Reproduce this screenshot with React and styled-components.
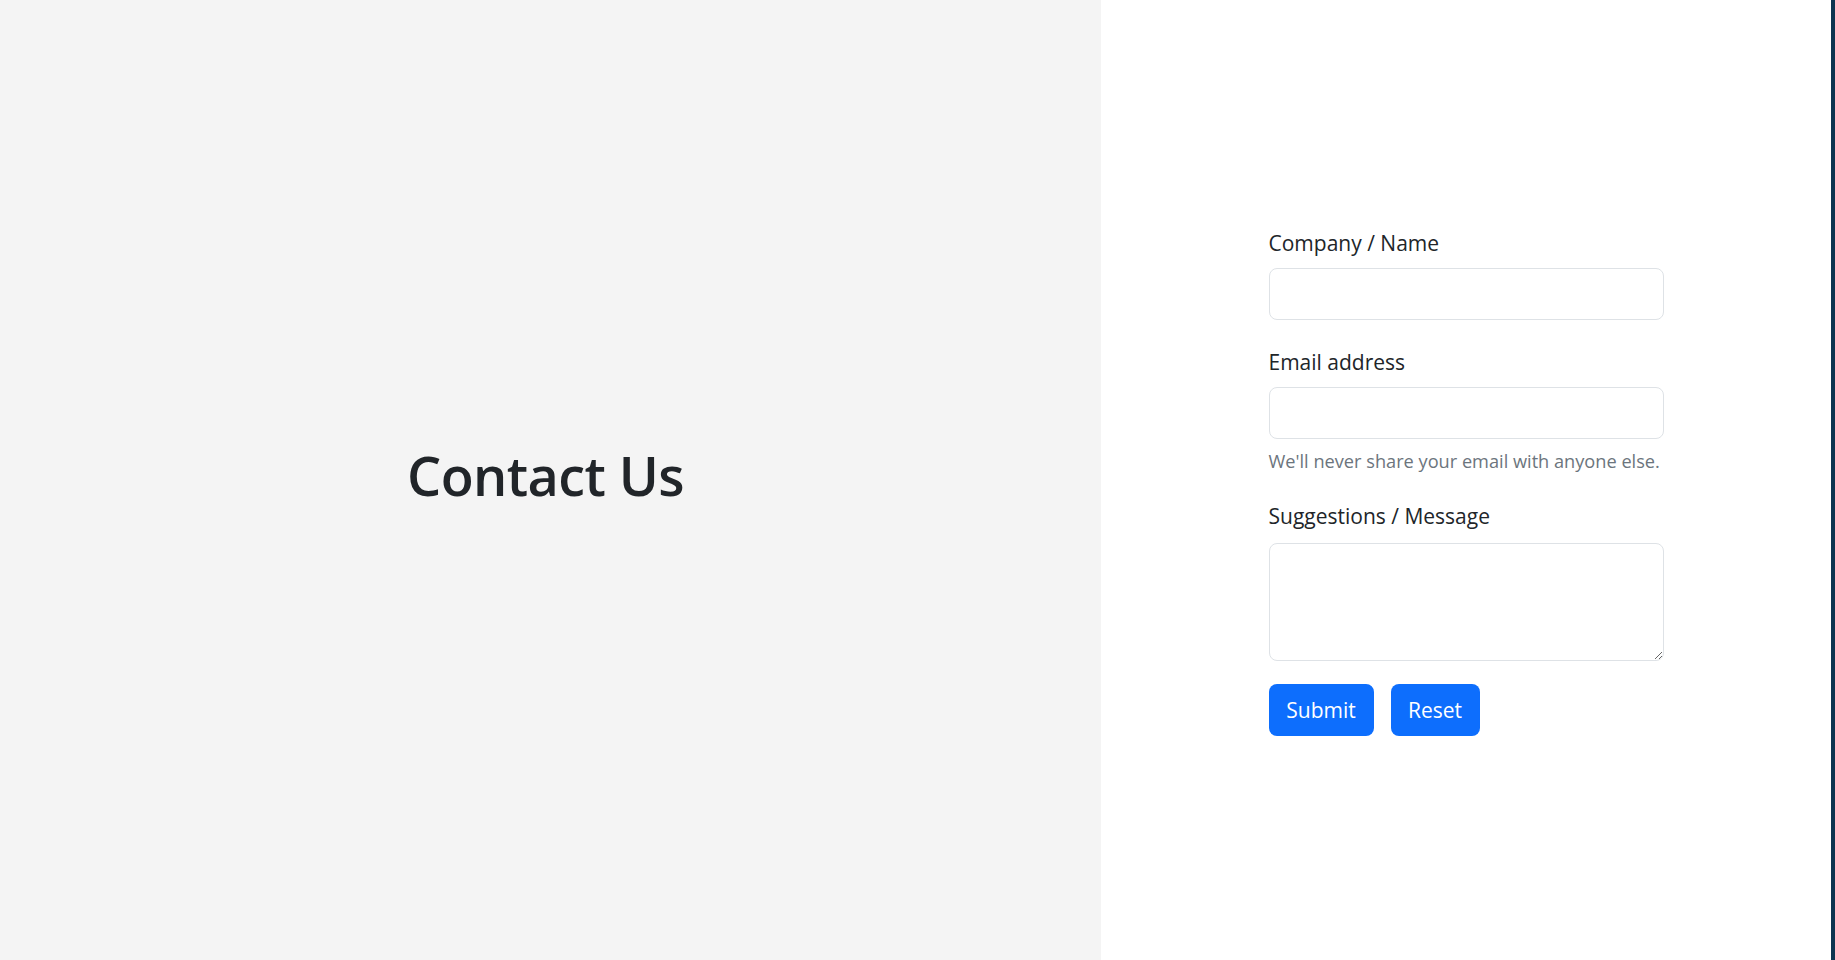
import React from "react";
import styled, { createGlobalStyle } from "styled-components";

const GlobalStyle = createGlobalStyle`
    html, body {
        margin: 0;
        padding: 0;
    }
    body {
        font-family: "Segoe UI", "Open Sans", "Noto Sans", sans-serif;
        color: #212529;
        background: #fff;
    }
`;

const Page = styled.div`
    display: grid;
    grid-template-columns: 1101px 1fr;
    height: 960px;
    border-right: 4px solid #0c3450;
    box-sizing: border-box;
`;

const Hero = styled.div`
    background-color: #f4f4f4;
    display: flex;
    align-items: center;
    justify-content: center;
    padding-right: 10px;
    padding-bottom: 10px;

    h1 {
        margin: 0;
        font-size: 54px;
        font-weight: 600;
        letter-spacing: -0.6px;
        color: #212529;
    }
`;

const FormSide = styled.div`
    display: flex;
    align-items: center;
    justify-content: center;
    padding-top: 3px;
`;

const Form = styled.form`
    width: 395px;
    display: flex;
    flex-direction: column;
`;

const Field = styled.div`
    display: flex;
    flex-direction: column;
    margin-bottom: ${props => props.$gap || 27}px;
`;

const Label = styled.label`
    font-size: 21px;
    line-height: 30px;
    margin-bottom: ${props => props.$space || 10}px;
`;

const Input = styled.input`
    box-sizing: border-box;
    height: 52px;
    border: 1px solid #dee2e6;
    border-radius: 8px;
    padding: 0 15px;
    font: inherit;
    font-size: 20px;
    outline: none;
`;

const TextArea = styled.textarea`
    box-sizing: border-box;
    height: 118px;
    border: 1px solid #dee2e6;
    border-radius: 8px;
    padding: 8px 15px;
    font: inherit;
    font-size: 20px;
    outline: none;
`;

const HelpText = styled.div`
    margin-top: 9px;
    font-size: 18.2px;
    line-height: 26px;
    color: #6c757d;
    white-space: nowrap;
`;

const Buttons = styled.div`
    display: flex;
    gap: 17px;
`;

const Button = styled.button`
    height: 52px;
    width: ${props => props.$width}px;
    border: none;
    border-radius: 8px;
    background-color: #0d6efd;
    color: #fff;
    font: inherit;
    font-size: 21px;
    cursor: pointer;
`;

const App = () => {
    return (
        <>
        <GlobalStyle />
        <Page>
            <Hero>
                <h1>Contact Us</h1>
            </Hero>
            <FormSide>
                <Form onSubmit={e => e.preventDefault()}>
                    <Field>
                        <Label htmlFor="name">Company / Name</Label>
                        <Input id="name" type="text" />
                    </Field>
                    <Field $gap={27}>
                        <Label htmlFor="email">Email address</Label>
                        <Input id="email" type="email" />
                        <HelpText>We'll never share your email with anyone else.</HelpText>
                    </Field>
                    <Field $gap={23}>
                        <Label htmlFor="message" $space={12}>Suggestions / Message</Label>
                        <TextArea id="message" />
                    </Field>
                    <Buttons>
                        <Button type="submit" $width={105}>Submit</Button>
                        <Button type="reset" $width={89}>Reset</Button>
                    </Buttons>
                </Form>
            </FormSide>
        </Page>
        </>
    )
}

export default App;
